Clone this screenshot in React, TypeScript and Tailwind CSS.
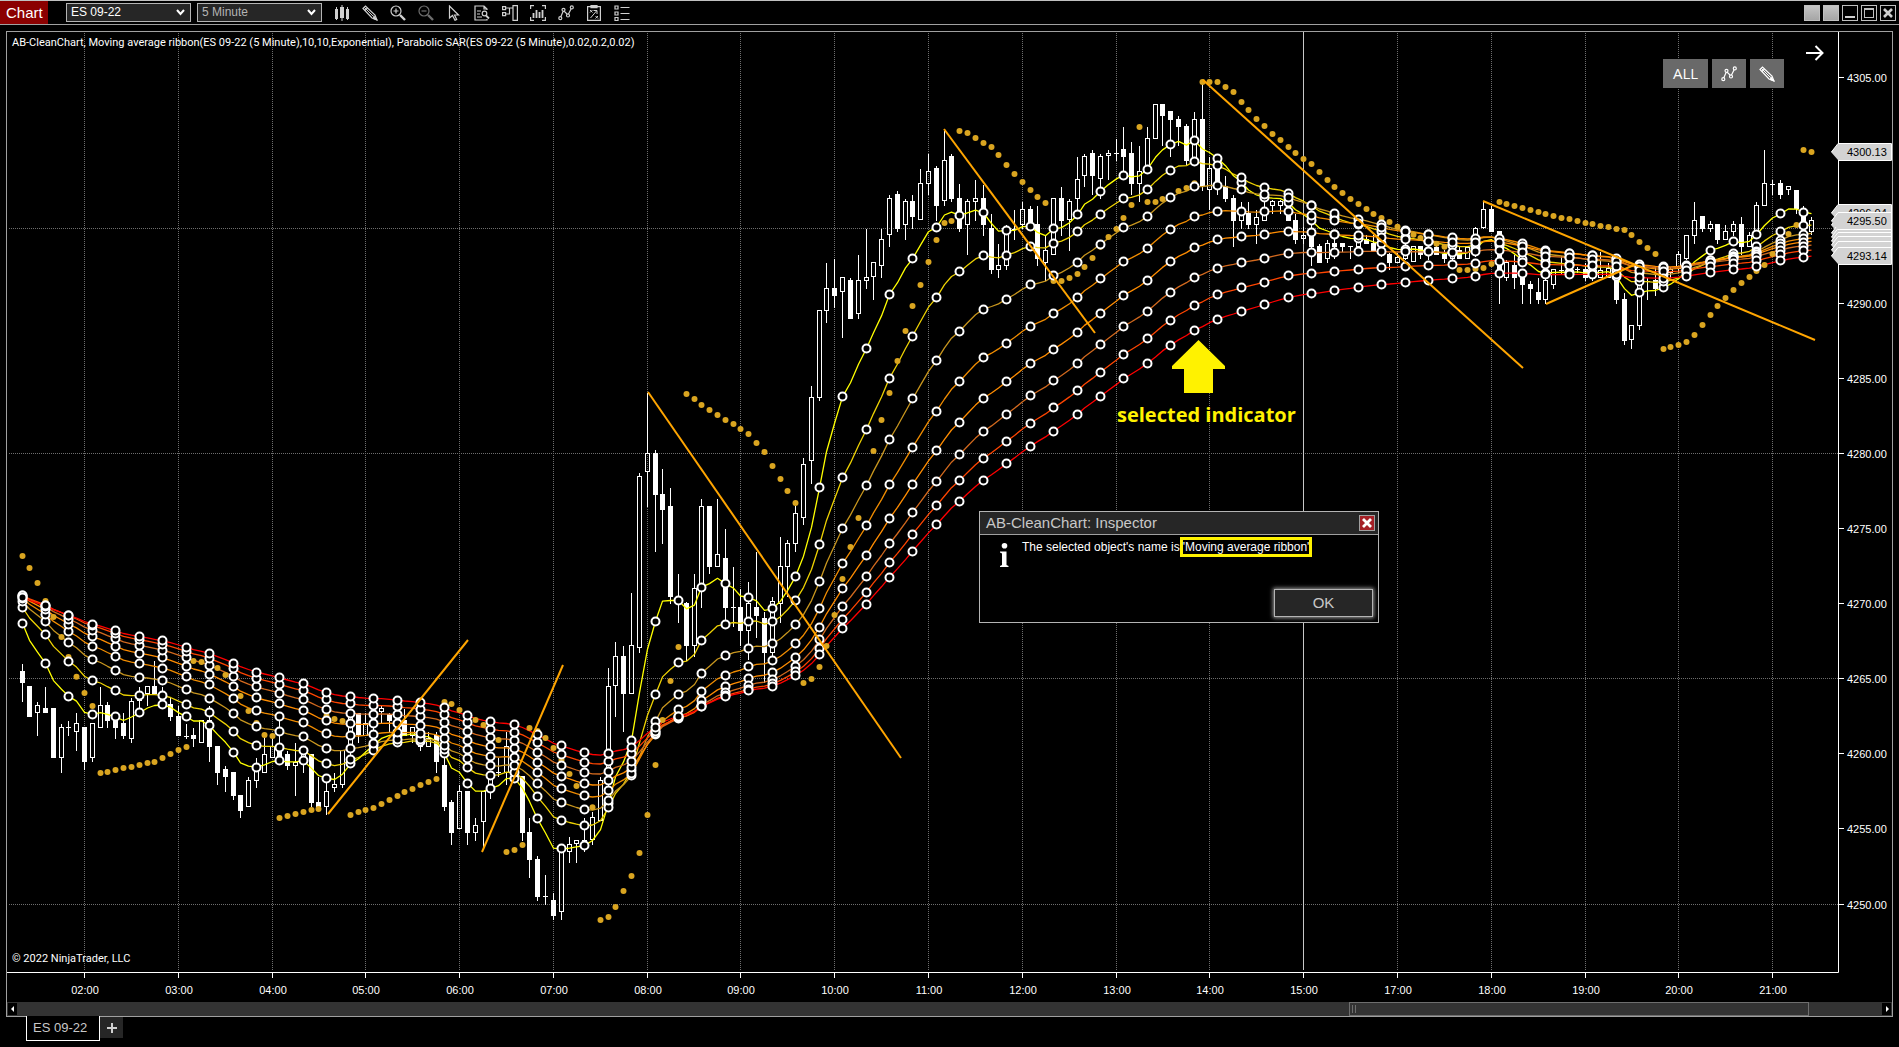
import { ReactNode } from "react"

interface QuoteBlock {
  start: number
  base: number
  rows: string
}

interface DotRun {
  start: number
  base: number
  ys: number[]
}

// Each row is "direction high top bottom low", in thirds of a pixel below the block's base.
// u = hollow (up) bar, d = filled (down) bar.
const QUOTES: QuoteBlock[] = [
  {
    start: 0,
    base: 520,
    rows: `d 432 453 489 545,d 498 498 591 591,u 546 555 579 647,d 501 563 579 579,d 564 564 713 713,
    u 612 621 713 758,u 603 622 622 648,u 579 609 635 692,d 621 621 725 749,u 609 609 713 725,
    u 501 555 623 623,d 546 555 602 623,d 579 590 623 656,d 579 609 648 656,u 534 543 656 668,
    u 501 518 543 579,u 498 498 521 558,d 423 498 521 521,d 501 521 545 560,d 534 552 590 602,
    d 558 588 648 648,u 612 647 647 656,d 623 645 656 680,u 600 600 668 668,d 558 600 680 725,
    d 678 678 759 795,d 737 747 770 816,d 756 756 828 840,d 825 825 873 894,u 771 780 860 860,
    u 714 752 782 803,u 655 702 758 758,u 655 679 713 713,d 590 690 712 730,d 692 702 737 749,
    u 668 725 737 828,u 680 702 735 758,d 702 702 849 860,d 770 847 860 870,u 780 813 860 885,
    u 760 793 803 815,u 690 690 795 803,u 570 590 690 735,d 580 580 645 668,u 580 610 648 648,
    u 565 577 612 640,u 558 565 577 608,d 580 582 603 635,d 570 600 640 650,d 567 600 647 647,
    u 620 622 647 668,d 600 623 680 692,u 636 655 680 680,d 636 645 725 758,d 700 735 860 873`,
  },
  {
    start: 55,
    base: 440,
    rows: `d 1079 1086 1178 1214,u 1035 1053 1168 1168,d 1053 1053 1178 1214,u 1134 1155 1178 1202,
    u 1053 1053 1145 1222,u 1005 1010 1053 1078,u 954 997 997 1010,u 876 919 998 1034,
    d 900 920 1008 1020,d 1008 1008 1178 1202,d 1134 1176 1259 1313,d 1248 1257 1370 1383,
    d 1305 1368 1368 1395,d 1360 1380 1428 1440,u 1222 1235 1415 1440,u 1191 1213 1235 1269,
    u 1200 1200 1213 1269,u 1135 1201 1201 1235,u 1115 1132 1201 1214,u 1010 1020 1144 1144,
    u 684 739 1020 1060,u 606 649 739 831,d 618 648 761 876,u 459 616 761 761,u 99 109 625 639,
    u -140 40 97 201,d 30 39 164 335,d 87 162 210 312,d 144 198 471 491,d 402 480 480 548,
    d 485 489 618 663,u 402 445 617 651,u 178 198 440 503,d 198 198 381 402,u 178 343 380 380,
    d 267 354 504 540,d 381 502 502 561,d 448 501 573 617,u 426 489 572 660,d 336 501 528 594,
    d 516 534 639 729,u 471 482 638 650,u 291 379 491 549,u 300 310 380 470,u 198 220 311 335,
    u 54 73 234 255`,
  },
  {
    start: 101,
    base: 100,
    rows: `u 858 892 1084 1151,u 630 631 893 903,u 489 565 632 668,d 477 564 588 623,u 531 532 577 713,
    d 535 540 656 656,u 465 541 643 656,u 387 532 542 567,u 487 487 532 599,u 387 418 497 534,
    u 285 294 406 440,d 273 282 387 397,u 297 304 374 420,d 285 303 351 387,u 207 250 361 361,
    u 162 213 251 285,d 198 204 318 363,u 93 181 304 318,d 163 168 297 306,d 252 294 387 396,
    u 297 304 374 465,u 240 294 305 363,d 255 294 375 407,d 342 384 510 522,u 432 495 510 534,
    u 375 385 497 509,d 330 386 386 420,u 306 328 374 387,d 318 327 374 390,d 318 373 477 498,
    u 405 451 488 543,u 294 295 464 464,d 261 294 362 408,u 297 304 361 453,u 171 238 296 350,
    u 162 169 227 261,d 150 159 228 285,u 162 169 238 297,u 150 159 169 240,d 117 160 160 183,
    d 81 147 171 222,d 126 159 252 285,u 138 214 251 306,u 81 115 215 220,u 12 13 116 116,
    d 12 12 48 138,d 33 33 60 171,d 48 57 81 138,d 72 78 183 195,u 36 58 180 195`,
  },
  {
    start: 151,
    base: 60,
    rows: `d 65 177 381 393,u 291 325 391 450,d 300 326 370 404,d 348 378 417 426,d 405 414 483 561,
    u 426 450 482 507,d 426 459 494 507,u 450 470 494 551,u 420 440 482 482,u 420 424 437 461,
    u 420 424 437 461,d 400 430 482 482,d 462 480 540 551,u 500 526 538 551,d 480 528 561 618,
    d 552 558 608 608,u 540 549 597 608,d 515 549 561 597,d 549 549 561 575,d 558 559 559 597,
    u 520 540 560 575,d 526 538 551 551,d 526 549 573 573,d 540 560 580 590,d 580 582 608 630,
    u 580 590 608 608,u 550 570 597 600,u 558 559 607 607,d 558 559 585 597,d 540 560 585 600,
    d 555 561 585 585,d 570 582 597 608,u 550 570 597 600,d 562 570 597 597,u 560 562 596 596,
    u 500 505 575 590,u 426 448 505 508`,
  },
  {
    start: 188,
    base: 120,
    rows: `d 258 267 335 335,d 333 333 450 552,u 420 427 473 483,d 405 435 474 507,d 450 470 494 552,
    d 483 491 507 552,d 474 516 540 552,u 460 481 539 552,u 447 447 494 507,u 407 449 449 462,
    d 430 449 460 475,d 440 447 447 460,d 430 447 474 483,u 440 452 478 483,u 395 449 474 474,
    u 430 445 474 474,d 440 445 540 552,d 519 537 663 675,u 615 616 661 687,u 480 482 618 630,
    d 474 482 482 540,d 440 480 507 528,u 440 458 500 505,u 440 448 460 474,u 393 402 448 460,
    u 345 346 416 420,u 246 301 347 372,d 288 288 327 336,u 303 313 326 335,d 312 312 360 372,
    u 315 334 359 359,u 303 313 335 348,d 291 312 381 405,u 336 346 380 380,u 246 256 346 350,
    u 90 190 257 257,d 180 191 191 225,d 180 189 225 236,u 198 199 211 225,d 210 210 267 282,
    d 258 267 315 330,u 290 301 335 345`,
  },
]

const SAR_RUNS: DotRun[] = [
  { start: 0, base: 520, ys: [108, 144, 189, 243, 291, 351, 411, 470, 519, 558] },
  { start: 10, base: 520, ys: [759, 756, 750, 744, 741, 735, 729, 726, 714, 702, 690, 681] },
  { start: 22, base: 520, ys: [423, 426, 434, 444, 465, 497, 528, 573, 609, 645, 648] },
  { start: 33, base: 520, ys: [894, 888, 882, 876, 870, 867] },
  { start: 39, base: 520, ys: [588, 597, 603] },
  { start: 42, base: 520, ys: [885, 876, 870, 864, 852, 840, 828, 816, 807, 795, 786, 777] },
  { start: 54, base: 440, ys: [786, 792, 810, 828, 840, 855, 873, 900] },
  { start: 62, base: 440, ys: [1236, 1230, 1215] },
  { start: 65, base: 440, ys: [864, 873, 894, 924, 960, 1002, 1038, 1070, 1102] },
  { start: 74, base: 440, ys: [1440, 1431, 1401, 1353, 1308, 1239, 1125, 975, 840, 723, 621] },
  { start: 85, base: 440, ys: [-138, -123, -105, -90, -75, -60, -48, -33, -18, 9, 36, 78, 117, 153, 189] },
  { start: 100, base: 440, ys: [729, 717, 681, 618, 525, 417, 321, 234] },
  { start: 108, base: 100, ys: [1158, 1053, 960, 879, 783, 693, 618, 555, 486, 420, 369, 363] },
  { start: 120, base: 100, ys: [93, 99, 114, 129, 141, 165, 195, 222, 246, 270, 291, 309] },
  { start: 132, base: 100, ys: [543, 543, 534, 522, 501, 474, 440, 411, 387, 354, 315] },
  { start: 143, base: 100, ys: [81] },
  { start: 144, base: 100, ys: [306, 306, 297, 288, 273, 264, 250] },
  {
    start: 151,
    base: 60,
    ys: [
      66, 66, 66, 81, 96, 126, 150, 177, 198, 222, 240, 261, 279, 297, 312, 336, 360, 381, 399, 417, 432, 447, 462,
      474, 486, 500, 512, 524, 534, 542, 551, 560, 570,
    ],
  },
  { start: 184, base: 60, ys: [630, 630, 627, 624, 612] },
  {
    start: 189,
    base: 120,
    ys: [246, 252, 258, 264, 270, 276, 282, 288, 294, 297, 303, 309, 312, 318, 321, 327, 330, 345, 366, 384, 402],
  },
  {
    start: 210,
    base: 120,
    ys: [687, 681, 675, 666, 645, 615, 585, 558, 534, 510, 489, 471, 453, 435, 402, 370, 342, 315],
  },
  { start: 228, base: 120, ys: [90, 96] },
]

const RIBBON = [
  { period: 10, seed: 622.7, color: "#ffff00" },
  { period: 20, seed: 607, color: "#eed202" },
  { period: 30, seed: 601, color: "#c8961e" },
  { period: 40, seed: 598, color: "#f08c00" },
  { period: 50, seed: 596, color: "#ff8c00" },
  { period: 60, seed: 595, color: "#d2691e" },
  { period: 70, seed: 595, color: "#ff4500" },
  { period: 80, seed: 597, color: "#ff0000" },
]

const TREND_LINES = [
  [328, 814, 468, 640],
  [482, 852, 563, 665],
  [648, 392, 901, 758],
  [944, 129, 1095, 333],
  [1203, 80, 1523, 368],
  [1483, 201, 1815, 340],
  [1546, 304, 1634, 265],
]

const PRICES = [4305, 4300, 4295, 4290, 4285, 4280, 4275, 4270, 4265, 4260, 4255, 4250]
const PRICE_GRID = [4295, 4280, 4265, 4250]
const HOURS = [2, 3, 4, 5, 6, 7, 8, 9, 10, 11, 12, 13, 14, 15, 17, 18, 19, 20, 21]

const barX = (i: number) => Math.floor(22 + 7.815 * i)
// no trading between 16:00 and 17:00, so later hours move one hour to the left
const hourX = (h: number) => barX(8 + 12 * (h > 15 ? h - 3 : h - 2))
const priceY = (p: number) => Math.round(904.5 - (p - 4250) * 15.02)
const priceAt = (y: number) => 4250 + (904.5 - y) / 15.02

const bars = QUOTES.flatMap((block) =>
  block.rows.split(",").map((row, n) => {
    const [dir, ...v] = row.trim().split(" ")
    const [high, top, bottom, low] = v.map((s) => Math.round(block.base + Number(s) / 3))
    return { i: block.start + n, down: dir === "d", high, top, bottom, low, close: dir === "d" ? bottom : top }
  })
)

const ribbonLines = RIBBON.map(({ period, seed, color }) => {
  const k = 2 / (period + 1)
  const ys: number[] = []
  bars.forEach((bar, n) => ys.push(n === 0 ? seed : ys[n - 1] + k * (bar.close - ys[n - 1])))
  return { color, ys }
})

function Candles() {
  return (
    <g shapeRendering="crispEdges">
      {bars.map((b) => {
        const x = barX(b.i)
        const h = b.bottom - b.top
        if (h < 1) {
          return <path key={b.i} d={`M${x + 0.5} ${b.high}V${b.low}M${x - 2} ${b.top + 0.5}h5`} stroke="#fff" />
        }
        return (
          <g key={b.i} stroke="#fff">
            <path d={`M${x + 0.5} ${b.high}V${b.top}M${x + 0.5} ${b.bottom}V${b.low}`} />
            <rect x={x - 1.5} y={b.top + 0.5} width={4} height={Math.max(h - 1, 1)} fill={b.down ? "#fff" : "none"} />
          </g>
        )
      })}
    </g>
  )
}

function PriceTag({ y, label }: { y: number; label?: string }) {
  return (
    <g>
      <path d={`M1831 ${y}L1838 ${y - 8}H1891V${y + 8}H1838Z`} fill="#d3d3d3" />
      <path d={`M1831.5 ${y}L1838 ${y - 8.5}H1891.5V${y + 8.5}H1838`} fill="none" stroke="#fff" />
      {label && (
        <text x={1847} y={y + 4} fill="#000" fontSize={11}>
          {label}
        </text>
      )}
    </g>
  )
}

function Plot() {
  const last = ribbonLines.map((l) => Math.round(l.ys[l.ys.length - 1]))

  return (
    <svg viewBox="7 32 1885 970" className="block w-full" fontFamily='"Liberation Sans", Arial, sans-serif'>
      {/* Grid */}
      <g stroke="#6e6e6e" strokeDasharray="1 1" shapeRendering="crispEdges">
        {HOURS.filter((h) => h !== 15).map((h) => (
          <path key={h} d={`M${hourX(h) + 0.5} 33V970`} />
        ))}
        {PRICE_GRID.map((p) => (
          <path key={p} d={`M9 ${priceY(p) - 0.5}H1838`} />
        ))}
      </g>
      <path d={`M${hourX(15) + 0.5} 32V970`} stroke="#c8c8c8" />

      <Candles />

      {/* Moving average ribbon */}
      <g fill="none" strokeWidth={1.3} strokeLinejoin="round">
        {ribbonLines.map(({ color, ys }) => (
          <polyline
            key={color}
            points={ys.map((y, i) => `${barX(i) + 0.5},${(y + 0.5).toFixed(1)}`).join(" ")}
            stroke={color}
          />
        ))}
      </g>

      {/* Parabolic SAR */}
      <g fill="#daa520">
        {SAR_RUNS.map((run) =>
          run.ys.map((y, n) => (
            <circle key={run.start + n} cx={barX(run.start + n) + 0.5} cy={run.base + y / 3} r={3} />
          ))
        )}
      </g>

      {/* Selection handles */}
      <g fill="#000" stroke="#fff" strokeWidth={2}>
        {ribbonLines.map(({ color, ys }) =>
          ys.map((y, i) =>
            i % 3 === 0 ? <circle key={color + i} cx={barX(i) + 0.5} cy={Math.round(y) + 0.5} r={4} /> : null
          )
        )}
      </g>

      <g stroke="#ffa500" strokeWidth={2}>
        {TREND_LINES.map(([x1, y1, x2, y2]) => (
          <line key={x1} x1={x1} y1={y1} x2={x2} y2={y2} />
        ))}
      </g>

      {/* Callout */}
      <path d="M1198.5 340L1225 366V369H1213V393H1184V369H1172V366Z" fill="#fff200" />
      <text x={1117} y={422} fill="#fff200" fontSize={20} fontWeight={700} fontFamily='"Open Sans", "Noto Sans", sans-serif'>
        selected indicator
      </text>

      {/* Axes */}
      <path d="M7 972.5H1838.5V32" fill="none" stroke="#fff" />
      <g fill="#fff" fontSize={11}>
        {HOURS.map((h) => (
          <g key={h}>
            <path d={`M${hourX(h) + 0.5} 973v5`} stroke="#fff" />
            <text x={hourX(h) + 1} y={994} textAnchor="middle">
              {`${String(h).padStart(2, "0")}:00`}
            </text>
          </g>
        ))}
        {PRICES.filter((p) => p !== 4300 && p !== 4295).map((p) => (
          <g key={p}>
            <path d={`M1839 ${priceY(p) - 0.5}h5`} stroke="#fff" />
            <text x={1847} y={priceY(p) + 4}>
              {p.toFixed(2)}
            </text>
          </g>
        ))}
      </g>

      {/* Only the first and last of the stacked tags have room for a value */}
      <PriceTag y={152} label="4300.13" />
      {last.map((y, n) => {
        if (n === 7) return <PriceTag key={n} y={y} label="4293.14" />
        return <PriceTag key={n} y={y} label={n === 0 ? priceAt(y).toFixed(2) : undefined} />
      })}
      <PriceTag y={221} label="4295.50" />
    </svg>
  )
}

function Icon({ children }: { children: ReactNode }) {
  return (
    <svg width={16} height={16} viewBox="0 0 16 16" fill="none" stroke="currentColor" strokeWidth={1.2}>
      {children}
    </svg>
  )
}

const pencil = (
  <>
    <path d="M1 3.5L3.5 1L13 10L15 15L10 13Z" />
    <path d="M2.3 2.3L11.5 11.5" strokeWidth={1} />
    <path d="M12 11.5L15 15L11.5 13.5Z" fill="currentColor" />
    <path d="M3 5.5L5.5 3" />
  </>
)

const zigzagLine = <path d="M2.5 12.5L5.5 5.5L10 10L13.5 3" />

const zigzagNodes = (
  <>
    <circle cx="2.3" cy="13.2" r="1.5" />
    <circle cx="5.5" cy="4.8" r="1.5" />
    <circle cx="10" cy="10.5" r="1.5" />
    <circle cx="13.8" cy="2.4" r="1.5" />
  </>
)

const TOOLS: { label: string; disabled?: boolean; art: ReactNode }[] = [
  {
    label: "Chart style",
    art: (
      <g fill="currentColor" stroke="none">
        <path d="M1 4h3v10H1zM2 2h1v13H2zM6 2h4v11H6zM7.5 0h1v16h-1zM12 4h3v10h-3zM13 2h1v13h-1z" />
      </g>
    ),
  },
  { label: "Drawing tools", art: pencil },
  {
    label: "Zoom in",
    art: (
      <>
        <circle cx="6" cy="6" r="5" />
        <path d="M3.5 6h5M6 3.5v5" />
        <path d="M10 10l5 5" strokeWidth={2.4} />
      </>
    ),
  },
  {
    label: "Zoom out",
    disabled: true,
    art: (
      <>
        <circle cx="6" cy="6" r="5" />
        <path d="M3.5 6h5" />
        <path d="M10 10l5 5" strokeWidth={2.4} />
      </>
    ),
  },
  { label: "Cursor", art: <path d="M3.5 1V13L6.5 10.5L9 15.3L10.700 14.4L8.500 10H12.500Z" /> },
  {
    label: "Data box",
    art: (
      <>
        <path d="M13 5V4L10 1H1v14h12v-1M10 1v3h3M3 6h4M3 9h3M3 12h5" />
        <circle cx="10.5" cy="8.5" r="2.3" />
        <path d="M12 10.5l3 3" strokeWidth={1.8} />
      </>
    ),
  },
  {
    label: "Chart trader",
    art: <path d="M.6 1.6h3v3h-3zM.6 7.6h3v3h-3zM11 .6h4.4v14.8H11zM4 3h7M4 9h3.5V3" />,
  },
  {
    label: "Data series",
    art: (
      <>
        <path d="M.6 4V.6H4M12 .6h3.4V4M.6 12v3.4H4M12 15.4h3.4V12" />
        <path d="M3.5 8v5M6.5 5v8M9.5 7v6M12.5 5v8" strokeWidth={1.8} />
      </>
    ),
  },
  {
    label: "Indicators",
    art: (
      <>
        {zigzagLine}
        <g fill="#000">{zigzagNodes}</g>
      </>
    ),
  },
  {
    label: "Strategies",
    art: (
      <>
        <path d="M1.6 1.6h12.8v13.8H1.6zM5 .6h6v2H5z" />
        <path d="M4 5l2.5 2.5M6.5 5L4 7.5M9.5 11l2.5 2.5M12 11l-2.5 2.5M4.5 13l6-7M7.5 5.5h3.5v3.5" strokeWidth={1} />
      </>
    ),
  },
  {
    label: "Properties",
    art: <path d="M1 1h3v3H1zM1 7h3v3H1zM1 12.5h3v3H1zM6.5 2.5h9M6.5 8.5h9M6.5 14.5h9" />,
  },
]

function ToolbarSelect({ label, value, className }: { label: string; value: string; className: string }) {
  return (
    <div className="relative">
      <select
        aria-label={label}
        defaultValue={value}
        className={`block h-[19px] w-[125px] appearance-none border border-[#b4b4b4] bg-[#262626] pl-1 text-[12px] leading-[17px] outline-none ${className}`}
      >
        <option>{value}</option>
      </select>
      <svg className="pointer-events-none absolute top-1.5 right-1.5" width="9" height="7" viewBox="0 0 9 7">
        <path d="M1 1L4.5 5L8 1" fill="none" stroke="#fff" strokeWidth={2} />
      </svg>
    </div>
  )
}

function WindowButton({ label, plain, children }: { label: string; plain?: boolean; children?: ReactNode }) {
  return (
    <button
      aria-label={label}
      className={`flex size-4 items-center justify-center border border-[#c0c0c0] ${
        plain ? "bg-linear-to-b from-[#c4c4c4] to-[#a6a6a6]" : "bg-black"
      }`}
    >
      {children}
    </button>
  )
}

function TopBar() {
  return (
    <header className="flex h-[25px] items-center border-t border-b border-t-[#c0c0c0] border-b-[#a0a0a0]">
      <h1 className="h-full w-12 bg-[#8b0000] pl-1.5 text-[15px] leading-[23px] text-white">Chart</h1>
      <div className="ml-[18px] flex gap-1.5">
        <ToolbarSelect label="Instrument" value="ES 09-22" className="text-white" />
        <ToolbarSelect label="Interval" value="5 Minute" className="text-[#b4b4b4]" />
      </div>
      <nav className="ml-3 flex gap-3">
        {TOOLS.map((tool) => (
          <button
            key={tool.label}
            aria-label={tool.label}
            disabled={tool.disabled}
            className="text-[#d0d0d0] disabled:text-[#6e6e6e]"
          >
            <Icon>{tool.art}</Icon>
          </button>
        ))}
      </nav>
      <div className="mr-[3px] ml-auto flex gap-[3px]">
        <WindowButton label="Instrument link" plain />
        <WindowButton label="Interval link" plain />
        <WindowButton label="Minimize">
          <span className="mt-2 h-0.5 w-2.5 bg-[#d0d0d0]" />
        </WindowButton>
        <WindowButton label="Maximize">
          <span className="h-2.5 w-2.5 border border-t-2 border-[#c0c0c0]" />
        </WindowButton>
        <WindowButton label="Close">
          <svg width="10" height="10" viewBox="0 0 10 10">
            <path d="M1 1L9 9M9 1L1 9" stroke="#d0d0d0" strokeWidth={2.6} />
          </svg>
        </WindowButton>
      </div>
    </header>
  )
}

function InspectorDialog() {
  return (
    <section
      role="dialog"
      aria-label="AB-CleanChart: Inspector"
      className="absolute top-[479px] left-[972px] flex h-28 w-[400px] flex-col border border-[#b4b4b4] bg-black"
    >
      <div className="flex h-[23px] items-center justify-between border-b border-[#a0a0a0] bg-[#262626] pr-[3px] pl-1.5">
        <h2 className="text-[15px] leading-[22px] text-[#c8c8c8]">AB-CleanChart: Inspector</h2>
        <button
          aria-label="Close"
          className="flex size-4 items-center justify-center border border-[#a0a0a0] bg-[#a52026]"
        >
          <svg width="10" height="10" viewBox="0 0 10 10">
            <path d="M1 1L9 9M9 1L1 9" stroke="#fff" strokeWidth={2.8} />
          </svg>
        </button>
      </div>
      <div className="flex items-start pl-5">
        <svg className="mt-2" width="9" height="24" viewBox="0 0 9 24" fill="#fff">
          <circle cx="4.5" cy="2.8" r="2.8" />
          <path d="M0 8.5H6.5V22L8.5 23V24H0V23L2 22V10.5L0 9.5Z" />
        </svg>
        <p className="mt-0.5 ml-[13px] flex items-center text-[12px] leading-[14px] text-white">
          The selected object's name is
          <mark className="border-[3px] border-[#fff200] bg-transparent text-white">'Moving average ribbon'</mark>
        </p>
      </div>
      <button className="mt-auto mr-[5px] mb-[5px] h-7 w-[99px] self-end border border-[#b4b4b4] bg-[#262626] text-[15px] text-[#c8c8c8] shadow-[0_0_4px_1px_#9a9a9a]">
        OK
      </button>
    </section>
  )
}

export default function App() {
  return (
    <div className="flex min-h-screen flex-col bg-black font-['Liberation_Sans',Arial,sans-serif]">
      <TopBar />

      <main className="mx-1.5 mt-1.5 border border-[#a0a0a0]">
        <div className="relative">
          <Plot />
          <p className="absolute top-1 left-[5px] font-[Roboto,sans-serif] text-[11px] leading-[14px] text-white">
            AB-CleanChart, Moving average ribbon(ES 09-22 (5 Minute),10,10,Exponential), Parabolic SAR(ES 09-22 (5
            Minute),0.02,0.2,0.02)
          </p>
          <p className="absolute bottom-9 left-[5px] font-[Roboto,sans-serif] text-[11px] leading-[14px] text-white">
            © 2022 NinjaTrader, LLC
          </p>

          {/* Drawing filters */}
          <div className="absolute top-[27px] right-[108px] flex gap-1 text-white">
            <button className="h-[29px] w-[45px] bg-[#696969] font-['Open_Sans',sans-serif] text-[15px]">ALL</button>
            <button aria-label="Indicators" className="flex h-[29px] w-[34px] items-center justify-center bg-[#696969]">
              <Icon>
                {zigzagLine}
                <g fill="#696969">{zigzagNodes}</g>
              </Icon>
            </button>
            <button aria-label="Drawings" className="flex h-[29px] w-[34px] items-center justify-center bg-[#696969]">
              <Icon>{pencil}</Icon>
            </button>
          </div>
          <button aria-label="Go to last bar" className="absolute top-3 right-[68px] text-white">
            <svg width="19" height="18" viewBox="0 0 19 18" fill="none" stroke="currentColor" strokeWidth={2}>
              <path d="M1 9H17M10.5 2L17.5 9L10.5 16" />
            </svg>
          </button>

          <InspectorDialog />
        </div>

        {/* Time scroller */}
        <div className="flex h-3.5 items-center bg-[#333] px-px">
          <button aria-label="Scroll left" className="flex h-3 w-[9px] items-center justify-center bg-black">
            <svg width="4" height="6" viewBox="0 0 4 6" fill="#fff">
              <path d="M0 3L3 0V6Z" />
            </svg>
          </button>
          <div className="flex h-3.5 flex-1">
            <div className="mr-[73px] ml-auto flex h-3.5 w-[460px] items-center gap-0.5 border border-[#6e6e6e] pl-0.5">
              <span className="h-2 w-px bg-[#6e6e6e]" />
              <span className="h-2 w-px bg-[#6e6e6e]" />
            </div>
          </div>
          <button aria-label="Scroll right" className="flex h-3 w-[9px] items-center justify-center bg-black">
            <svg width="4" height="6" viewBox="0 0 4 6" fill="#fff">
              <path d="M4 3L1 0V6Z" />
            </svg>
          </button>
        </div>
      </main>

      <footer className="-mt-px flex items-start pl-[26px]">
        <button className="relative h-[25px] w-[74px] border border-t-0 border-white bg-black pl-1.5 text-left text-[13px] leading-[22px] text-[#c8c8c8]">
          ES 09-22
        </button>
        <button
          aria-label="Add tab"
          className="mt-px flex h-[21px] w-[23px] items-center justify-center bg-[#262626] text-[#d0d0d0]"
        >
          <svg width="10" height="10" viewBox="0 0 10 10" stroke="currentColor" strokeWidth={2}>
            <path d="M5 0V10M0 5H10" />
          </svg>
        </button>
      </footer>
    </div>
  )
}
